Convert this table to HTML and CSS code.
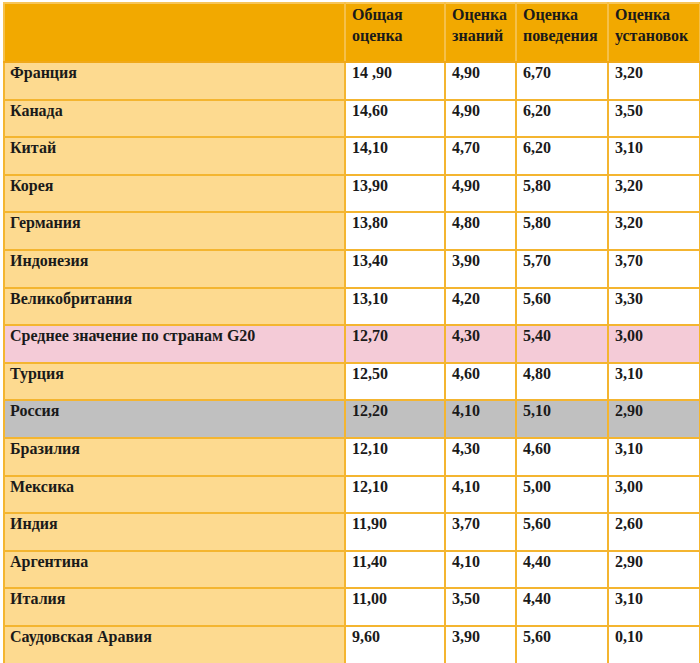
FILE: index.html
```html
<!DOCTYPE html>
<html lang="ru">
<head>
<meta charset="utf-8">
<link rel="stylesheet" href="styles.css">
</head>
<body>
<table class="rank">
  <colgroup>
    <col class="c1"><col class="c2"><col class="c3"><col class="c4"><col class="c5">
  </colgroup>
  <thead>
    <tr>
      <th></th>
      <th>Общая<br>оценка</th>
      <th>Оценка<br>знаний</th>
      <th>Оценка<br>поведения</th>
      <th>Оценка<br>установок</th>
    </tr>
  </thead>
  <tbody>
    <tr><td>Франция</td><td>14 ,90</td><td>4,90</td><td>6,70</td><td>3,20</td></tr>
    <tr><td>Канада</td><td>14,60</td><td>4,90</td><td>6,20</td><td>3,50</td></tr>
    <tr><td>Китай</td><td>14,10</td><td>4,70</td><td>6,20</td><td>3,10</td></tr>
    <tr><td>Корея</td><td>13,90</td><td>4,90</td><td>5,80</td><td>3,20</td></tr>
    <tr><td>Германия</td><td>13,80</td><td>4,80</td><td>5,80</td><td>3,20</td></tr>
    <tr><td>Индонезия</td><td>13,40</td><td>3,90</td><td>5,70</td><td>3,70</td></tr>
    <tr><td>Великобритания</td><td>13,10</td><td>4,20</td><td>5,60</td><td>3,30</td></tr>
    <tr class="avg"><td>Среднее значение по странам G20</td><td>12,70</td><td>4,30</td><td>5,40</td><td>3,00</td></tr>
    <tr><td>Турция</td><td>12,50</td><td>4,60</td><td>4,80</td><td>3,10</td></tr>
    <tr class="ru"><td>Россия</td><td>12,20</td><td>4,10</td><td>5,10</td><td>2,90</td></tr>
    <tr><td>Бразилия</td><td>12,10</td><td>4,30</td><td>4,60</td><td>3,10</td></tr>
    <tr><td>Мексика</td><td>12,10</td><td>4,10</td><td>5,00</td><td>3,00</td></tr>
    <tr><td>Индия</td><td>11,90</td><td>3,70</td><td>5,60</td><td>2,60</td></tr>
    <tr><td>Аргентина</td><td>11,40</td><td>4,10</td><td>4,40</td><td>2,90</td></tr>
    <tr><td>Италия</td><td>11,00</td><td>3,50</td><td>4,40</td><td>3,10</td></tr>
    <tr><td>Саудовская Аравия</td><td>9,60</td><td>3,90</td><td>5,60</td><td>0,10</td></tr>
  </tbody>
</table>
</body>
</html>
```
FILE: styles.css
```css
html, body {
  margin: 0;
  padding: 0;
  background: #ffffff;
}
body {
  padding: 2px 0 0 3px;
  font-family: "Liberation Serif", "Times New Roman", serif;
  color: #1a1a1a;
}
.rank {
  border-collapse: collapse;
  table-layout: fixed;
  width: 696px;
  font-size: 16px;
  font-weight: bold;
}
.c1 { width: 341px; }
.c2 { width: 100px; }
.c3 { width: 71px; }
.c4 { width: 92px; }
.c5 { width: 92px; }
.rank th {
  background: #f2a900;
  height: 59px;
  padding: 0 2px 0 6px;
  text-align: left;
  vertical-align: top;
  line-height: 21px;
  border: 2px solid #f5c04a;
  border-top-color: #f7c65a;
  border-bottom: 2px solid #f0a818;
  box-sizing: border-box;
}
.rank td {
  height: 37.6px;
  padding: 1px 2px 0 6px;
  vertical-align: top;
  line-height: 18px;
  background: #ffffff;
  border: 2px solid #f4b530;
  box-sizing: border-box;
  white-space: nowrap;
}
.rank td:first-child {
  background: #fdda90;
  padding-left: 5px;
}
.rank tr.avg td,
.rank tr.avg td:first-child {
  background: #f4cbd7;
}
.rank tr.ru td,
.rank tr.ru td:first-child {
  background: #c0c0c0;
}
```
